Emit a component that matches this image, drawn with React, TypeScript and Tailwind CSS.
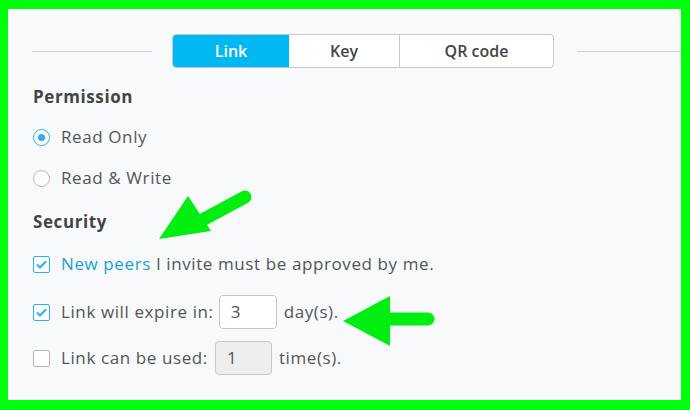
import React from "react";

const font = { fontFamily: '"Open Sans", "Noto Sans", sans-serif' };

function Check({ checked }: { checked: boolean }) {
  return (
    <span
      className={`flex h-[17px] w-[17px] shrink-0 items-center justify-center rounded-[2px] border bg-white ${
        checked ? "border-[#29b3e6]" : "border-[#b5b5b5]"
      }`}
    >
      {checked && (
        <svg width="11" height="9" viewBox="0 0 11 9" fill="none">
          <path d="M1 4.5L4 7.5L10 1.2" stroke="#29b3e6" strokeWidth="2" />
        </svg>
      )}
    </span>
  );
}

function Radio({ checked }: { checked: boolean }) {
  return (
    <span
      className={`flex h-[17px] w-[17px] shrink-0 items-center justify-center rounded-full border bg-white ${
        checked ? "border-[#29b3e6]" : "border-[#b5b5b5]"
      }`}
    >
      {checked && <span className="h-[7px] w-[7px] rounded-full bg-[#29b3e6]" />}
    </span>
  );
}

export default function App() {
  return (
    <div className="h-[410px] w-[690px] bg-[#00ff0c] pt-[9px] pl-[8px] pr-[9px] pb-[10px]" style={font}>
      <div className="relative h-full w-full bg-[#f8f9fb] text-[#555] text-[17px] tracking-[0.6px]">
        <div className="flex items-center pt-[25px]">
          <div className="ml-[24px] h-px w-[120px] bg-[#cfcfcf]" />
          <div className="ml-[20px] flex h-[34px] overflow-hidden rounded-[4px] border border-[#c8c8c8] bg-white text-[16px] tracking-normal">
            <div className="flex w-[116px] items-center justify-center bg-[#02b8f3] font-semibold text-white">Link</div>
            <div className="flex w-[111px] items-center justify-center border-r border-[#c8c8c8] font-semibold text-[#444]">Key</div>
            <div className="flex w-[153px] items-center justify-center font-semibold text-[#444]">QR code</div>
          </div>
          <div className="ml-[23px] h-px flex-1 bg-[#cfcfcf]" />
        </div>

        <div className="pl-[25px]">
          <div className="mt-[17px] font-bold text-[#444] leading-[24px]">Permission</div>
          <div className="mt-[16px] flex items-center gap-[11px] leading-[24px]">
            <Radio checked />
            <span>Read Only</span>
          </div>
          <div className="mt-[17px] flex items-center gap-[11px] leading-[24px]">
            <Radio checked={false} />
            <span>Read &amp; Write</span>
          </div>
          <div className="mt-[20px] font-bold text-[#444] leading-[24px]">Security</div>
          <div className="mt-[18px] flex items-center gap-[11px] leading-[24px]">
            <Check checked />
            <span>
              <span className="text-[#1a9fd3]">New peers</span> I invite must be approved by me.
            </span>
          </div>
          <div className="mt-[19px] flex items-center leading-[24px]">
            <Check checked />
            <span className="ml-[11px]">Link will expire in:</span>
            <div className="ml-[5px] flex h-[34px] w-[58px] items-center rounded-[4px] border border-[#c8c8c8] bg-white pl-[11px]">3</div>
            <span className="ml-[7px]">day(s).</span>
          </div>
          <div className="mt-[12px] flex items-center leading-[24px]">
            <Check checked={false} />
            <span className="ml-[11px]">Link can be used:</span>
            <div className="ml-[7px] flex h-[34px] w-[57px] items-center rounded-[4px] border border-[#c8c8c8] bg-[#eeeeee] pl-[11px]">1</div>
            <span className="ml-[7px]">time(s).</span>
          </div>
        </div>

        <svg className="absolute left-[140px] top-[170px]" width="120" height="80" viewBox="0 0 120 80">
          <path d="M97 18 L45 46" stroke="#00ee10" strokeWidth="13" strokeLinecap="round" />
          <polygon points="11,60 40,17 63,52" fill="#00ee10" />
        </svg>
        <svg className="absolute left-[330px] top-[285px]" width="100" height="60" viewBox="0 0 100 60">
          <path d="M90 25 L45 25" stroke="#00ee10" strokeWidth="13" strokeLinecap="round" />
          <polygon points="5,27 52,2 52,52" fill="#00ee10" />
        </svg>
      </div>
    </div>
  );
}
